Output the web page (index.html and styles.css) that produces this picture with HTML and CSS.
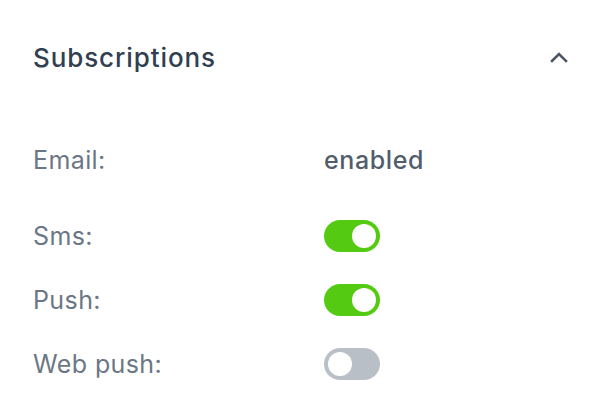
FILE: index.html
```html
<!DOCTYPE html>
<html lang="en">
<head>
<meta charset="UTF-8" />
<meta name="viewport" content="width=device-width, initial-scale=1" />
<title>Subscriptions</title>
<link rel="stylesheet" href="styles.css">
</head>
<body>

  <section class="panel">
    <div class="panel-header">
      <h2 class="panel-title">Subscriptions</h2>
      <button class="collapse-btn" aria-label="Collapse">
        <svg width="18" height="12" viewBox="0 0 18 12">
          <path d="M2 10 L9 3 L16 10" fill="none" stroke="#4b5563" stroke-width="2.6" stroke-linecap="square" />
        </svg>
      </button>
    </div>

    <div class="fields">
      <div class="field field-email">
        <span class="label">Email:</span>
        <span class="value">enabled</span>
      </div>
      <div class="field">
        <span class="label">Sms:</span>
        <span class="toggle on"><span class="knob"></span></span>
      </div>
      <div class="field">
        <span class="label">Push:</span>
        <span class="toggle on"><span class="knob"></span></span>
      </div>
      <div class="field">
        <span class="label">Web push:</span>
        <span class="toggle"><span class="knob"></span></span>
      </div>
    </div>
  </section>

</body>
</html>
```

FILE: styles.css
```css
body {
  margin: 0;
  background: #ffffff;
  font-family: 'Inter', 'Noto Sans', sans-serif;
}

.panel {
  padding: 33px 28px 0 33px;
}

/* Cabecera */
.panel-header {
  display: flex;
  align-items: center;
  justify-content: space-between;
  height: 48px;
}

.panel-title {
  margin: 0;
  font-size: 26px;
  font-weight: 500;
  color: #323f50;
  letter-spacing: 0.9px;
}

.collapse-btn {
  border: 0;
  background: none;
  padding: 0;
  width: 18px;
  height: 12px;
  display: flex;
  cursor: pointer;
}

/* Filas */
.fields {
  display: flex;
  flex-direction: column;
  gap: 32px;
  margin-top: 63px;
}

.field {
  display: grid;
  grid-template-columns: 291px auto;
  align-items: center;
  height: 32px;
}

.field-email {
  margin-bottom: 12px;
}

.label {
  font-size: 25px;
  letter-spacing: 0.4px;
  color: #6b7785;
}

.value {
  font-size: 25px;
  font-weight: 500;
  letter-spacing: 0.6px;
  color: #525d6b;
}

/* Interruptor */
.toggle {
  width: 56px;
  height: 32px;
  border-radius: 16px;
  background: #b9bfc6;
  box-sizing: border-box;
  padding: 4px;
  display: flex;
}

.toggle.on {
  background: #54cb12;
  justify-content: flex-end;
}

.knob {
  width: 24px;
  height: 24px;
  border-radius: 50%;
  background: #ffffff;
}
```
